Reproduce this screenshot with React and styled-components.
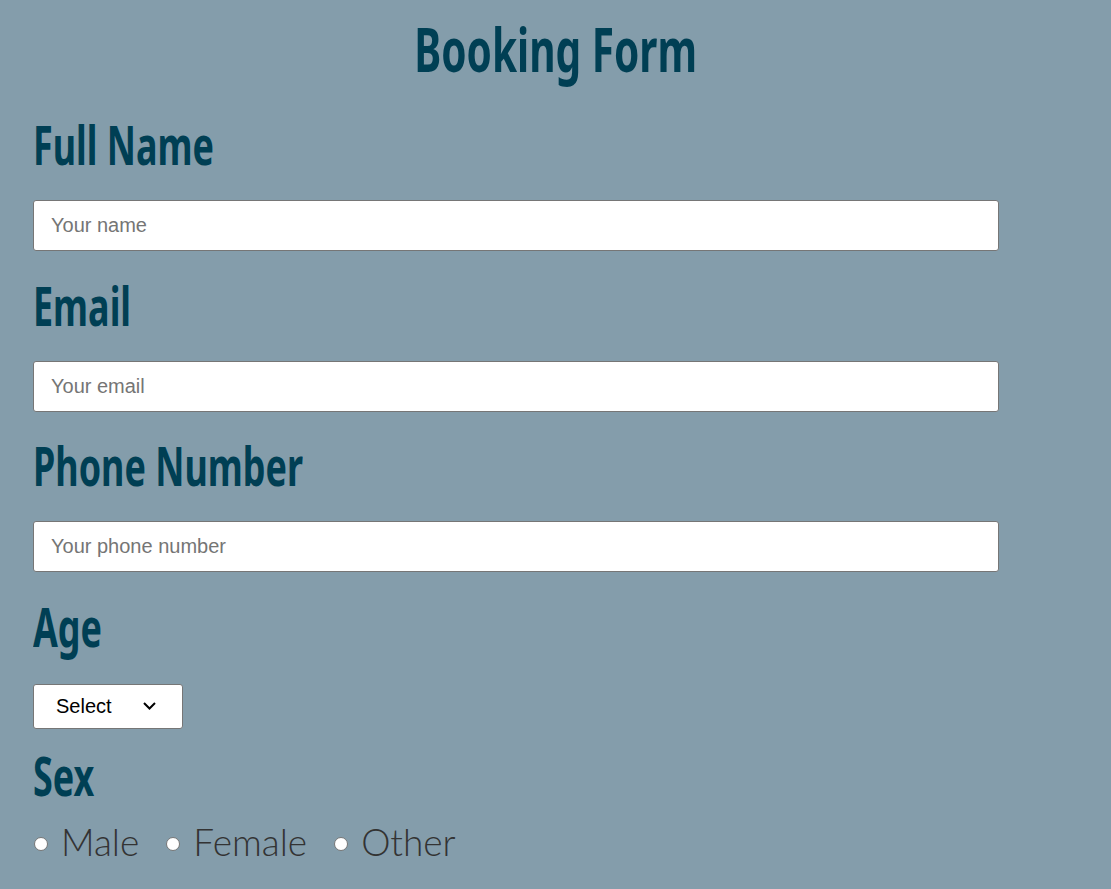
import React from 'react'
import styled, { createGlobalStyle } from 'styled-components'

const GlobalStyle = createGlobalStyle`
  body {
    margin: 0;
    background: #849dab;
    font-family: "Liberation Sans", Arial, sans-serif;
  }
`

const Page = styled.div`
  padding: 18px 33px 30px;
  box-sizing: border-box;
  min-height: 889px;
`

// condensed display face, narrowed to the tall, tight heading look
const Heading = styled.span`
  display: inline-block;
  transform: scaleX(0.665);
  transform-origin: ${(p) => (p.$center ? 'center' : 'left')};
  white-space: nowrap;
`

const Title = styled.h1`
  margin: 0 0 38px;
  text-align: center;
  font-family: "Noto Sans", sans-serif;
  font-weight: 700;
  font-size: 61px;
  line-height: 1;
  color: #003f54;
`

const Label = styled.h2`
  margin: 0 0 ${(p) => p.$gap || 29}px;
  font-family: "Noto Sans", sans-serif;
  font-weight: 700;
  font-size: 54px;
  line-height: 1;
  color: #003f54;
`

const TextInput = styled.input`
  display: block;
  box-sizing: border-box;
  width: 966px;
  height: 51px;
  margin: 0 0 26.5px;
  padding: 0 17px;
  border: 1px solid #767676;
  border-radius: 3px;
  background: #fff;
  font-family: "Liberation Sans", Arial, sans-serif;
  font-size: 20px;
  color: #222;

  &::placeholder {
    color: #757575;
  }
`

const SelectWrap = styled.div`
  position: relative;
  width: 150px;
  margin: 0 0 19px;
`

const Select = styled.select`
  display: block;
  box-sizing: border-box;
  width: 150px;
  height: 45px;
  padding: 0 0 0 22px;
  border: 1px solid #767676;
  border-radius: 3px;
  background: #fff;
  appearance: none;
  font-family: "Liberation Sans", Arial, sans-serif;
  font-size: 20px;
  color: #000;
`

const Chevron = styled.svg`
  position: absolute;
  right: 27px;
  top: 18px;
  pointer-events: none;
`

const RadioRow = styled.div`
  display: flex;
  align-items: center;
`

const RadioLabel = styled.label`
  display: flex;
  align-items: center;
  margin-right: 26px;
  font-family: Lato, "Open Sans", sans-serif;
  font-weight: 300;
  font-size: 37px;
  line-height: 1.2;
  color: #333;
`

const Radio = styled.input`
  appearance: none;
  box-sizing: border-box;
  width: 14px;
  height: 14px;
  margin: 5px 13px 0 1px;
  border: 1px solid #767676;
  border-radius: 50%;
  background: #fff;

  &:checked {
    border: 4px solid #0075ff;
  }
`

const fields = [
  { label: 'Full Name', placeholder: 'Your name', type: 'text' },
  { label: 'Email', placeholder: 'Your email', type: 'email' },
  { label: 'Phone Number', placeholder: 'Your phone number', type: 'tel' }
]

const App = () => {
  return (
    <Page>
      <GlobalStyle />
      <Title>
        <Heading $center>Booking Form</Heading>
      </Title>
      <form>
        {fields.map((f) => (
          <React.Fragment key={f.label}>
            <Label>
              <Heading>{f.label}</Heading>
            </Label>
            <TextInput type={f.type} placeholder={f.placeholder} />
          </React.Fragment>
        ))}
        <Label $gap={31}>
          <Heading>Age</Heading>
        </Label>
        <SelectWrap>
          <Select defaultValue="">
            <option value="">Select</option>
            <option value="1">Under 18</option>
            <option value="2">18 - 30</option>
            <option value="3">31 - 50</option>
            <option value="4">Over 50</option>
          </Select>
          <Chevron width="13" height="8" viewBox="0 0 13 8">
            <path d="M1 1l5.5 5.5L12 1" fill="none" stroke="#000" strokeWidth="2" />
          </Chevron>
        </SelectWrap>
        <Label $gap={18}>
          <Heading>Sex</Heading>
        </Label>
        <RadioRow>
          {['Male', 'Female', 'Other'].map((s) => (
            <RadioLabel key={s}>
              <Radio type="radio" name="sex" value={s.toLowerCase()} />
              {s}
            </RadioLabel>
          ))}
        </RadioRow>
      </form>
    </Page>
  )
}

export default App
